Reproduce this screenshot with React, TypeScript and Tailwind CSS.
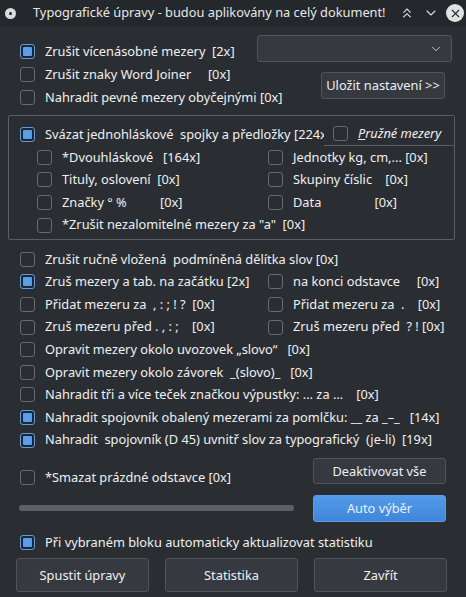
import { ChevronDown, ChevronsUp, X } from 'lucide-react';

type Row = { label: string; checked?: boolean };

const FONT = { fontFamily: '"Noto Sans", "DejaVu Sans", sans-serif' };

function Box({ checked }: { checked?: boolean }) {
  return checked ? (
    <span className="w-[15px] h-[15px] shrink-0 rounded-[3px] border border-[#5e9be0] bg-[#232629] flex items-center justify-center">
      <span className="w-[9px] h-[9px] rounded-[1px] bg-[#5a9ee9]" />
    </span>
  ) : (
    <span className="w-[15px] h-[15px] shrink-0 rounded-[3px] border border-[#676b70] bg-[#2a2e32]" />
  );
}

function Check({ label, checked, className = '' }: Row & { className?: string }) {
  return (
    <div className={`flex items-center gap-[10px] whitespace-pre ${className}`}>
      <Box checked={checked} />
      <span>{label}</span>
    </div>
  );
}

function Btn({ children, className = '' }: { children: React.ReactNode; className?: string }) {
  return (
    <div
      className={`flex items-center justify-center rounded-[3px] border border-[#50555b] bg-[#363a40] text-[#eff0f1] ${className}`}
    >
      {children}
    </div>
  );
}

const MAIN_ROWS: { left: Row; right?: Row }[] = [
  { left: { label: 'Zrušit ručně vložená  podmíněná dělítka slov [0x]' } },
  {
    left: { label: 'Zruš mezery a tab. na začátku [2x]', checked: true },
    right: { label: 'na konci odstavce     [0x]' },
  },
  {
    left: { label: 'Přidat mezeru za  , : ; ! ?  [0x]' },
    right: { label: 'Přidat mezeru za  .    [0x]' },
  },
  {
    left: { label: 'Zruš mezeru před . , : ;    [0x]' },
    right: { label: 'Zruš mezeru před  ? ! [0x]' },
  },
  { left: { label: 'Opravit mezery okolo uvozovek „slovo“   [0x]' } },
  { left: { label: 'Opravit mezery okolo závorek  _(slovo)_   [0x]' } },
  { left: { label: 'Nahradit tři a více teček značkou výpustky: ... za …    [0x]' } },
  { left: { label: 'Nahradit spojovník obalený mezerami za pomlčku: __ za _–_   [14x]', checked: true } },
  { left: { label: 'Nahradit  spojovník (D 45) uvnitř slov za typografický  (je-li)  [19x]', checked: true } },
];

const GROUP_ROWS: { left: Row; right?: Row }[] = [
  { left: { label: '*Dvouhláskové   [164x]' }, right: { label: 'Jednotky kg, cm,... [0x]' } },
  { left: { label: 'Tituly, oslovení  [0x]' }, right: { label: 'Skupiny číslic    [0x]' } },
  { left: { label: 'Značky ° %          [0x]' }, right: { label: 'Data                [0x]' } },
  { left: { label: '*Zrušit nezalomitelné mezery za "a"  [0x]' } },
];

export default function App() {
  return (
    <div className="w-[466px] h-[597px] bg-[#2a2e32] text-[#eff0f1] text-[12.8px] overflow-hidden" style={FONT}>
      {/* title bar */}
      <div className="h-[26px] bg-[#24272b] flex items-center pl-[5px] pr-[2px] whitespace-nowrap">
        <span className="w-[11px] h-[11px] shrink-0 rounded-full bg-[#dcdcdc] flex items-center justify-center">
          <span className="w-[3px] h-[3px] rounded-full bg-[#24272b]" />
        </span>
        <span className="ml-[17px] text-[#e6e7e8]">Typografické úpravy - budou aplikovány na celý dokument!</span>
        <ChevronsUp size={16} strokeWidth={1.6} className="ml-auto shrink-0 text-[#dcdcdc]" />
        <ChevronDown size={16} strokeWidth={1.6} className="ml-[8px] shrink-0 text-[#dcdcdc]" />
        <span className="ml-[7px] w-[18px] h-[18px] shrink-0 rounded-full bg-[#e2e2e2] flex items-center justify-center">
          <X size={13} strokeWidth={2} className="text-[#24272b]" />
        </span>
      </div>

      {/* top section */}
      <div className="flex pl-[20px] pr-[14px]">
        <div className="pt-[14px] w-[237px] shrink-0">
          <Check className="h-[23px]" checked label="Zrušit vícenásobné mezery  [2x]" />
          <Check className="h-[23px]" label="Zrušit znaky Word Joiner     [0x]" />
          <Check className="h-[23px]" label="Nahradit pevné mezery obyčejnými [0x]" />
        </div>
        <div className="ml-auto w-[195px] shrink-0 flex flex-col items-end">
          <div className="mt-[9px] w-[195px] h-[27px] rounded-[3px] border border-[#50555b] bg-[#363a40] flex items-center justify-end pr-[8px]">
            <ChevronDown size={14} strokeWidth={1.5} className="text-[#dcdcdc]" />
          </div>
          <Btn className="mt-[10px] mr-[7px] w-[124px] h-[27px]">Uložit nastavení &gt;&gt;</Btn>
        </div>
      </div>

      {/* group box */}
      <div className="mt-[6px] ml-[8px] mr-[11px] h-[125px] border border-[#5a5f65] rounded-[2px] pt-[7px]">
        <div className="flex items-center h-[23px] pl-[11px]">
          <div className="w-[304px] shrink-0 overflow-hidden">
            <Check checked label="Svázat jednohláskové  spojky a předložky [224x]" />
          </div>
          <div className="flex-1 h-full flex items-center pl-[9px] border-b border-[#5a5f65] -mt-[1px]">
            <Box />
            <span className="ml-[10px] italic">
              <span className="underline">P</span>ružné mezery
            </span>
          </div>
        </div>
        {GROUP_ROWS.map((r, i) => (
          <div key={i} className="flex items-center h-[22.6px] pl-[28px]">
            <Check className="w-[231px] shrink-0" label={r.left.label} />
            {r.right && <Check label={r.right.label} />}
          </div>
        ))}
      </div>

      {/* main list */}
      <div className="mt-[8px] pl-[20px]">
        {MAIN_ROWS.map((r, i) => (
          <div key={i} className="flex items-center h-[22.6px]">
            <Check checked={r.left.checked} className="w-[248px] shrink-0" label={r.left.label} />
            {r.right && <Check label={r.right.label} />}
          </div>
        ))}
      </div>

      {/* smazat + buttons */}
      <div className="mt-[7px] flex pl-[19px] pr-[20px]">
        <div className="flex-1 flex flex-col">
          <Check className="h-[22px] mt-[8px] pl-[1px]" label="*Smazat prázdné odstavce [0x]" />
          <div className="mt-[17px] w-[275px] h-[6px] rounded-full bg-[#5d6167]" />
        </div>
        <div className="w-[133px] shrink-0 flex flex-col">
          <Btn className="h-[26px]">Deaktivovat vše</Btn>
          <div className="mt-[11px] h-[27px] rounded-[3px] border border-[#5a9de6] bg-gradient-to-b from-[#559ae8] to-[#3f86db] text-[#e8f0fb] flex items-center justify-center">
            Auto výběr
          </div>
        </div>
      </div>

      <Check className="mt-[9px] h-[23px] pl-[20px]" checked label="Při vybraném bloku automaticky aktualizovat statistiku" />

      <div className="mt-[4px] flex pl-[16px] gap-[16px]">
        <Btn className="w-[133px] h-[34px]">Spustit úpravy</Btn>
        <Btn className="w-[133px] h-[34px]">Statistika</Btn>
        <Btn className="w-[133px] h-[34px]">Zavřít</Btn>
      </div>
    </div>
  );
}
